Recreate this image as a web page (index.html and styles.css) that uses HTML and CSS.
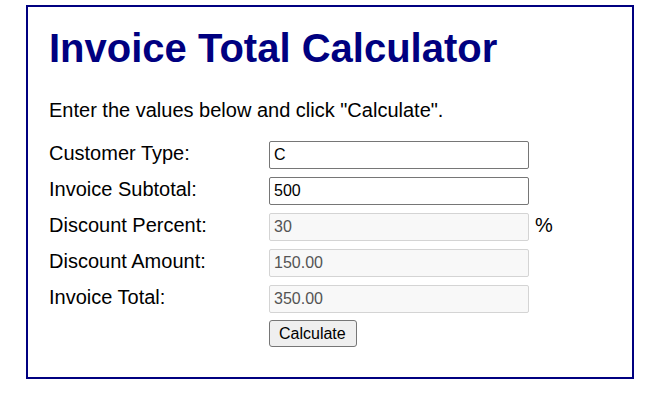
FILE: index.html
```html
<!DOCTYPE html>
<html lang="en">
<head>
<meta charset="utf-8">
<title>Invoice Total Calculator</title>
<link rel="stylesheet" href="styles.css">
</head>
<body>
<main class="box">
  <h1 class="title">Invoice Total Calculator</h1>
  <p class="intro">Enter the values below and click "Calculate".</p>
  <form class="form">
    <div class="row">
      <label class="label" for="type">Customer Type:</label>
      <input class="field" id="type" type="text" value="C">
    </div>
    <div class="row">
      <label class="label" for="subtotal">Invoice Subtotal:</label>
      <input class="field" id="subtotal" type="text" value="500">
    </div>
    <div class="row">
      <label class="label" for="percent">Discount Percent:</label>
      <input class="field field-off" id="percent" type="text" value="30" disabled>
      <span class="unit">%</span>
    </div>
    <div class="row">
      <label class="label" for="amount">Discount Amount:</label>
      <input class="field field-off" id="amount" type="text" value="150.00" disabled>
    </div>
    <div class="row">
      <label class="label" for="total">Invoice Total:</label>
      <input class="field field-off" id="total" type="text" value="350.00" disabled>
    </div>
    <div class="row">
      <span class="label"></span>
      <button class="btn" type="button">Calculate</button>
    </div>
  </form>
</main>
</body>
</html>
```

FILE: styles.css
```css
html, body {
  margin: 0;
  padding: 0;
  background: #ffffff;
}

body {
  font-family: "Liberation Sans", Arial, Helvetica, sans-serif;
  font-size: 20px;
  color: #000000;
}

.box {
  display: block;
  width: 563px;
  margin: 5px auto 0;
  padding: 0 20px 30px 21px;
  border: 2px solid #000080;
}

.title {
  margin: 19px 0 28px;
  font-size: 40px;
  font-weight: bold;
  line-height: normal;
  color: #000080;
}

.intro {
  margin: 0 0 19px;
  line-height: normal;
}

.form {
  display: flex;
  flex-direction: column;
  gap: 8px;
  margin: 0;
}

.row {
  display: flex;
  align-items: flex-start;
}

.label {
  flex: 0 0 220px;
  width: 220px;
  padding-top: 1px;
  line-height: normal;
}

.field {
  box-sizing: border-box;
  width: 260px;
  height: 28px;
  margin: 0;
  padding: 4px 4px;
  font-family: "Liberation Sans", Arial, Helvetica, sans-serif;
  font-size: 16px;
  color: #000000;
  background: #ffffff;
  border: 1px solid #767676;
  border-radius: 2px;
}

.field-off {
  color: #545454;
  background: #f8f8f8;
  border-color: #d4d4d4;
}

.unit {
  margin-left: 6px;
  padding-top: 1px;
  line-height: normal;
}

.btn {
  box-sizing: border-box;
  height: 27px;
  margin: -1px 0 0;
  padding: 3px 10px 3px 9px;
  font-family: "Liberation Sans", Arial, Helvetica, sans-serif;
  font-size: 16px;
  color: #000000;
  background: #efefef;
  border: 1px solid #767676;
  border-radius: 3px;
}
```
